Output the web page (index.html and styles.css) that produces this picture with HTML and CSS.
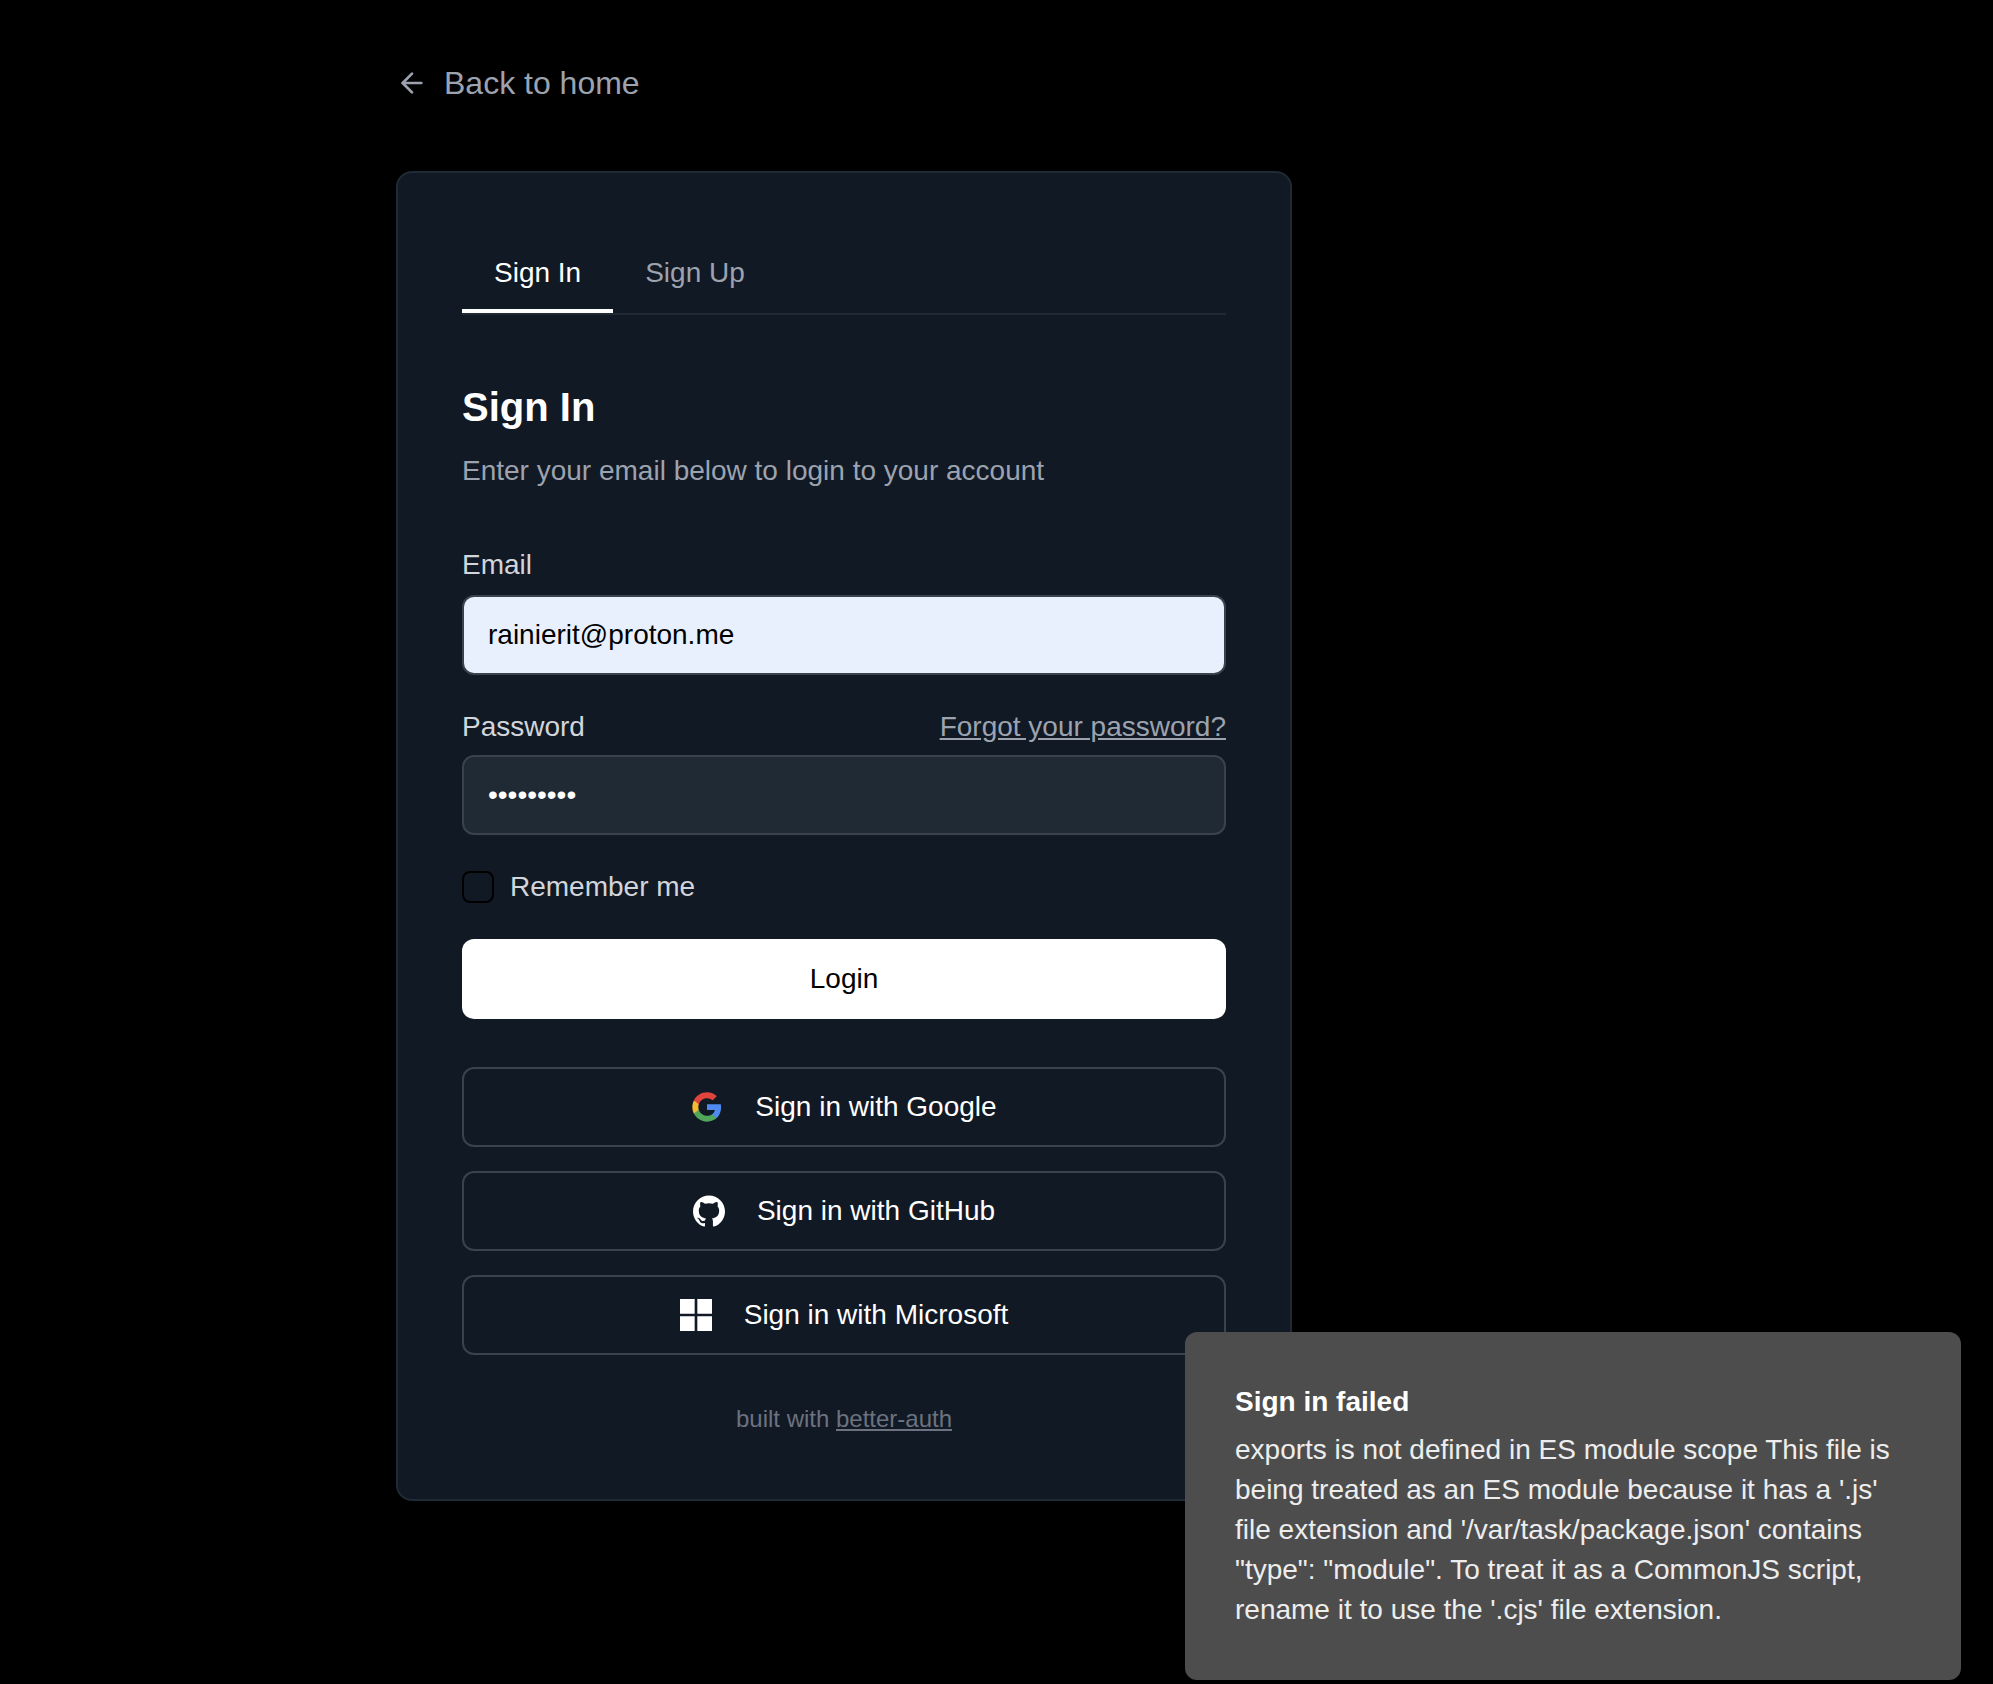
FILE: index.html
```html
<!DOCTYPE html>
<html lang="en">
<head>
<meta charset="utf-8">
<title>Sign In</title>
<link rel="stylesheet" href="styles.css">
</head>
<body>
<main class="page">
  <a class="back" href="#">
    <svg class="icon" viewBox="0 0 24 24" fill="none" stroke="currentColor" stroke-width="2" stroke-linecap="round" stroke-linejoin="round"><path d="m12 19-7-7 7-7"/><path d="M19 12H5"/></svg>
    <span>Back to home</span>
  </a>
  <section class="card">
    <nav class="tabs">
      <button class="tab tab-active" type="button">Sign In</button>
      <button class="tab" type="button">Sign Up</button>
    </nav>
    <header class="header">
      <h1 class="title">Sign In</h1>
      <p class="description">Enter your email below to login to your account</p>
    </header>
    <form class="form">
      <div class="field">
        <label class="label label-tight" for="email">Email</label>
        <input class="input input-filled" id="email" type="text" value="rainierit@proton.me">
      </div>
      <div class="field field-password">
        <div class="label-row">
          <label class="label" for="password">Password</label>
          <a class="forgot" href="#">Forgot your password?</a>
        </div>
        <input class="input" id="password" type="password" value="password1">
      </div>
      <label class="remember"><input class="checkbox" type="checkbox"><span>Remember me</span></label>
      <button class="login" type="button">Login</button>
    </form>
    <div class="providers">
      <button class="provider" type="button">
        <svg class="icon" viewBox="0 0 24 24"><path fill="#4f8af0" d="M22.56 12.25c0-.78-.07-1.53-.2-2.25H12v4.26h5.92c-.26 1.37-1.04 2.53-2.21 3.31v2.77h3.57c2.08-1.92 3.28-4.74 3.28-8.09z"/><path fill="#50a65a" d="M12 23c2.97 0 5.46-.98 7.28-2.66l-3.57-2.77c-.98.66-2.23 1.06-3.71 1.06-2.86 0-5.29-1.93-6.16-4.53H2.18v2.84C3.99 20.53 7.7 23 12 23z"/><path fill="#f5b932" d="M5.84 14.09c-.22-.66-.35-1.36-.35-2.09s.13-1.43.35-2.09V7.07H2.18C1.43 8.55 1 10.22 1 12s.43 3.45 1.18 4.93l2.85-2.22.81-.62z"/><path fill="#df453c" d="M12 5.38c1.62 0 3.06.56 4.21 1.64l3.15-3.15C17.45 2.09 14.97 1 12 1 7.7 1 3.99 3.47 2.18 7.07l3.66 2.84c.87-2.6 3.3-4.53 6.16-4.53z"/></svg>
        <span>Sign in with Google</span>
      </button>
      <button class="provider" type="button">
        <svg class="icon" viewBox="0 0 24 24" fill="currentColor"><path d="M12 .297c-6.63 0-12 5.373-12 12 0 5.303 3.438 9.8 8.205 11.385.6.113.82-.258.82-.577 0-.285-.01-1.04-.015-2.04-3.338.724-4.042-1.61-4.042-1.61C4.422 18.07 3.633 17.7 3.633 17.7c-1.087-.744.084-.729.084-.729 1.205.084 1.838 1.236 1.838 1.236 1.07 1.835 2.809 1.305 3.495.998.108-.776.417-1.305.76-1.605-2.665-.3-5.466-1.332-5.466-5.93 0-1.31.465-2.38 1.235-3.22-.135-.303-.54-1.523.105-3.176 0 0 1.005-.322 3.3 1.23.96-.267 1.98-.399 3-.405 1.02.006 2.04.138 3 .405 2.28-1.552 3.285-1.23 3.285-1.23.645 1.653.24 2.873.12 3.176.765.84 1.23 1.91 1.23 3.22 0 4.61-2.805 5.625-5.475 5.92.42.36.81 1.096.81 2.22 0 1.606-.015 2.896-.015 3.286 0 .315.21.69.825.57C20.565 22.092 24 17.592 24 12.297c0-6.627-5.373-12-12-12"/></svg>
        <span>Sign in with GitHub</span>
      </button>
      <button class="provider" type="button">
        <svg class="icon" viewBox="0 0 24 24" fill="currentColor"><path d="M0 0h11v11H0zM13 0h11v11H13zM0 13h11v11H0zM13 13h11v11H13z"/></svg>
        <span>Sign in with Microsoft</span>
      </button>
    </div>
    <p class="footer">built with <a class="footer-link" href="#">better-auth</a></p>
  </section>
</main>
<aside class="toast">
  <div class="toast-title">Sign in failed</div>
  <div class="toast-text">exports is not defined in ES module scope This file is being treated as an ES module because it has a '.js' file extension and '/var/task/package.json' contains "type": "module". To treat it as a CommonJS script, rename it to use the '.cjs' file extension.</div>
</aside>
</body>
</html>
```
FILE: styles.css
```css
* { box-sizing: border-box; margin: 0; padding: 0; }

body {
  min-height: 100vh;
  background: #000;
  color: #fff;
  font: 28px/40px "Liberation Sans", Arial, sans-serif;
}

button, input { font: inherit; color: inherit; }
button { background: none; border: 0; }
a { color: inherit; }

.page { width: 896px; margin-left: 396px; padding-top: 59px; }
.icon { display: block; flex: none; width: 32px; height: 32px; }

.back {
  display: inline-flex;
  align-items: center;
  gap: 16px;
  margin-bottom: 64px;
  vertical-align: top;
  color: #9ca3af;
  font-size: 32px;
  line-height: 48px;
  text-decoration: none;
}

.card {
  padding: 64px;
  border: 2px solid #202a35;
  border-radius: 16px;
  background: #111925;
}

.tabs { display: flex; border-bottom: 2px solid #202a35; }
.tab { padding: 16px 32px; border-bottom: 4px solid transparent; color: #9ca3af; }
.tab-active { border-bottom-color: #fff; color: #fff; }

.header { margin-top: 64px; }
.title { font-size: 40px; line-height: 56px; font-weight: 700; }
.description { margin-top: 16px; color: #9ca3af; }

.form { display: flex; flex-direction: column; gap: 32px; margin-top: 60px; }
.field { display: flex; flex-direction: column; gap: 16px; }
.field-password { gap: 8px; }
.label { color: #d2d5da; }
.label-tight { line-height: 28px; }
.label-row { display: flex; justify-content: space-between; }
.forgot { color: #9ca3af; }

.input {
  width: 100%;
  height: 80px;
  padding: 0 24px;
  border: 2px solid #38434e;
  border-radius: 12px;
  outline: none;
  background: #202a35;
}
.input-filled { background: #e8f0fe; color: #000; }

.remember { display: flex; align-items: center; gap: 16px; color: #d2d5da; }
.checkbox {
  appearance: none;
  width: 32px;
  height: 32px;
  border: 2px solid #000;
  border-radius: 8px;
}

.login { height: 80px; border-radius: 12px; background: #fff; color: #000; }

.providers { display: flex; flex-direction: column; gap: 24px; margin-top: 48px; }
.provider {
  display: flex;
  align-items: center;
  justify-content: center;
  gap: 32px;
  height: 80px;
  border: 2px solid #38434e;
  border-radius: 12px;
}

.footer {
  margin-top: 48px;
  color: #6c727f;
  font-size: 24px;
  line-height: 32px;
  text-align: center;
}

.toast {
  position: fixed;
  right: 32px;
  bottom: 4px;
  width: 776px;
  padding: 50px;
  border-radius: 12px;
  background: #4d4d4d;
}
.toast-title { margin-bottom: 8px; font-weight: 700; }
.toast-text { color: #ededed; }
```
